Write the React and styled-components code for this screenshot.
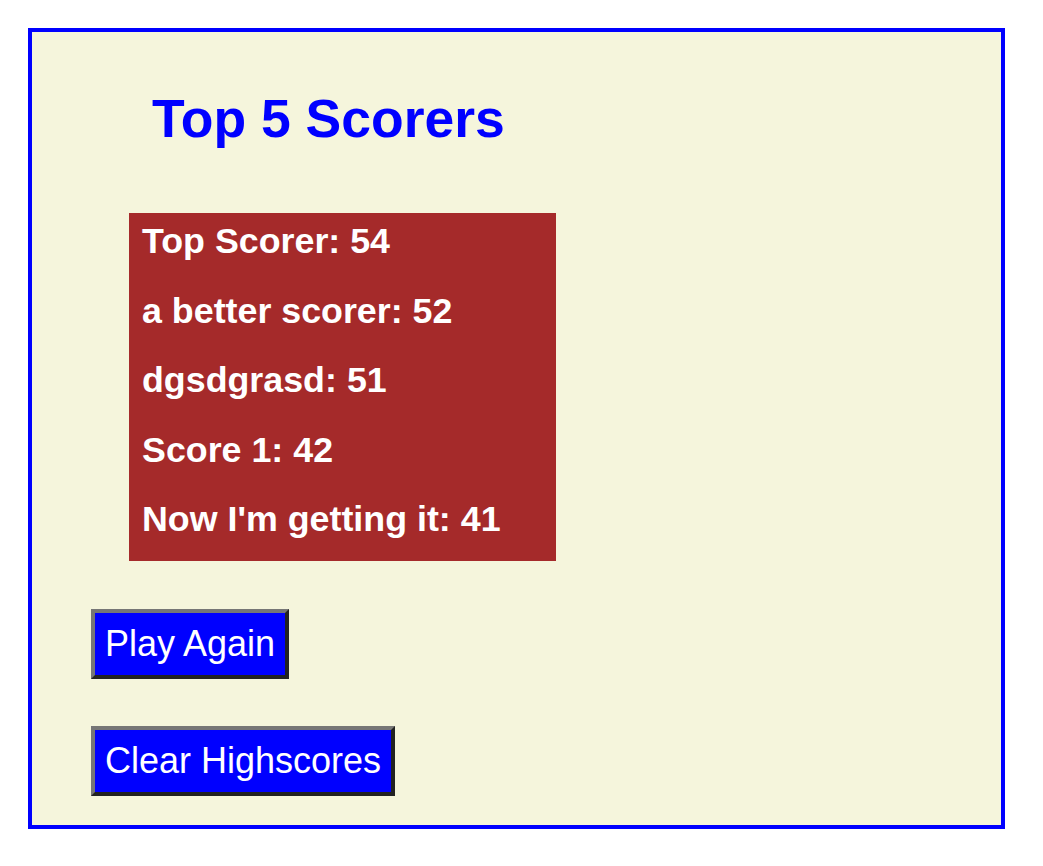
import React from 'react';
import styled, { createGlobalStyle } from 'styled-components';

const GlobalStyle = createGlobalStyle`
  body {
    margin: 8px;
    background: #ffffff;
    font-family: "Liberation Sans", Arial, sans-serif;
  }
`;

const Board = styled.div`
  box-sizing: border-box;
  width: 977px;
  margin: 20px;
  padding: 56px 0 29px;
  border: 4px solid #0000ff;
  background: #f5f5dc;
  display: flex;
  flex-direction: column;
  align-items: flex-start;
`;

const Title = styled.h1`
  margin: 0 0 63px 120px;
  font-size: 53.5px;
  line-height: 62px;
  font-weight: bold;
  color: #0000ff;
`;

const ScoreList = styled.ul`
  list-style: none;
  box-sizing: border-box;
  width: 427px;
  margin: 0 0 48px 97px;
  padding: 0;
  background: #a52a2a;
`;

const ScoreItem = styled.li`
  padding: 8px 12px 20px 13px;
  font-size: 35.8px;
  line-height: 41.6px;
  font-weight: bold;
  color: #ffffff;
  white-space: nowrap;
`;

const Button = styled.button`
  margin: 0 0 ${({ $gap }) => $gap || 0}px 59px;
  padding: 10px 10px;
  font-family: "Liberation Sans", Arial, sans-serif;
  font-size: 36px;
  line-height: 42px;
  color: #ffffff;
  background: #0000ff;
  border: 4px solid;
  border-color: #767676 #222222 #222222 #767676;
  cursor: pointer;
`;

const scores = [
  { name: 'Top Scorer', score: 54 },
  { name: 'a better scorer', score: 52 },
  { name: 'dgsdgrasd', score: 51 },
  { name: 'Score 1', score: 42 },
  { name: "Now I'm getting it", score: 41 },
];

const App = () => (
  <>
    <GlobalStyle />
    <Board>
      <Title>Top 5 Scorers</Title>
      <ScoreList>
        {scores.map((s) => (
          <ScoreItem key={s.name}>
            {s.name}: {s.score}
          </ScoreItem>
        ))}
      </ScoreList>
      <Button type="button" $gap={47}>Play Again</Button>
      <Button type="button">Clear Highscores</Button>
    </Board>
  </>
);

export default App;
